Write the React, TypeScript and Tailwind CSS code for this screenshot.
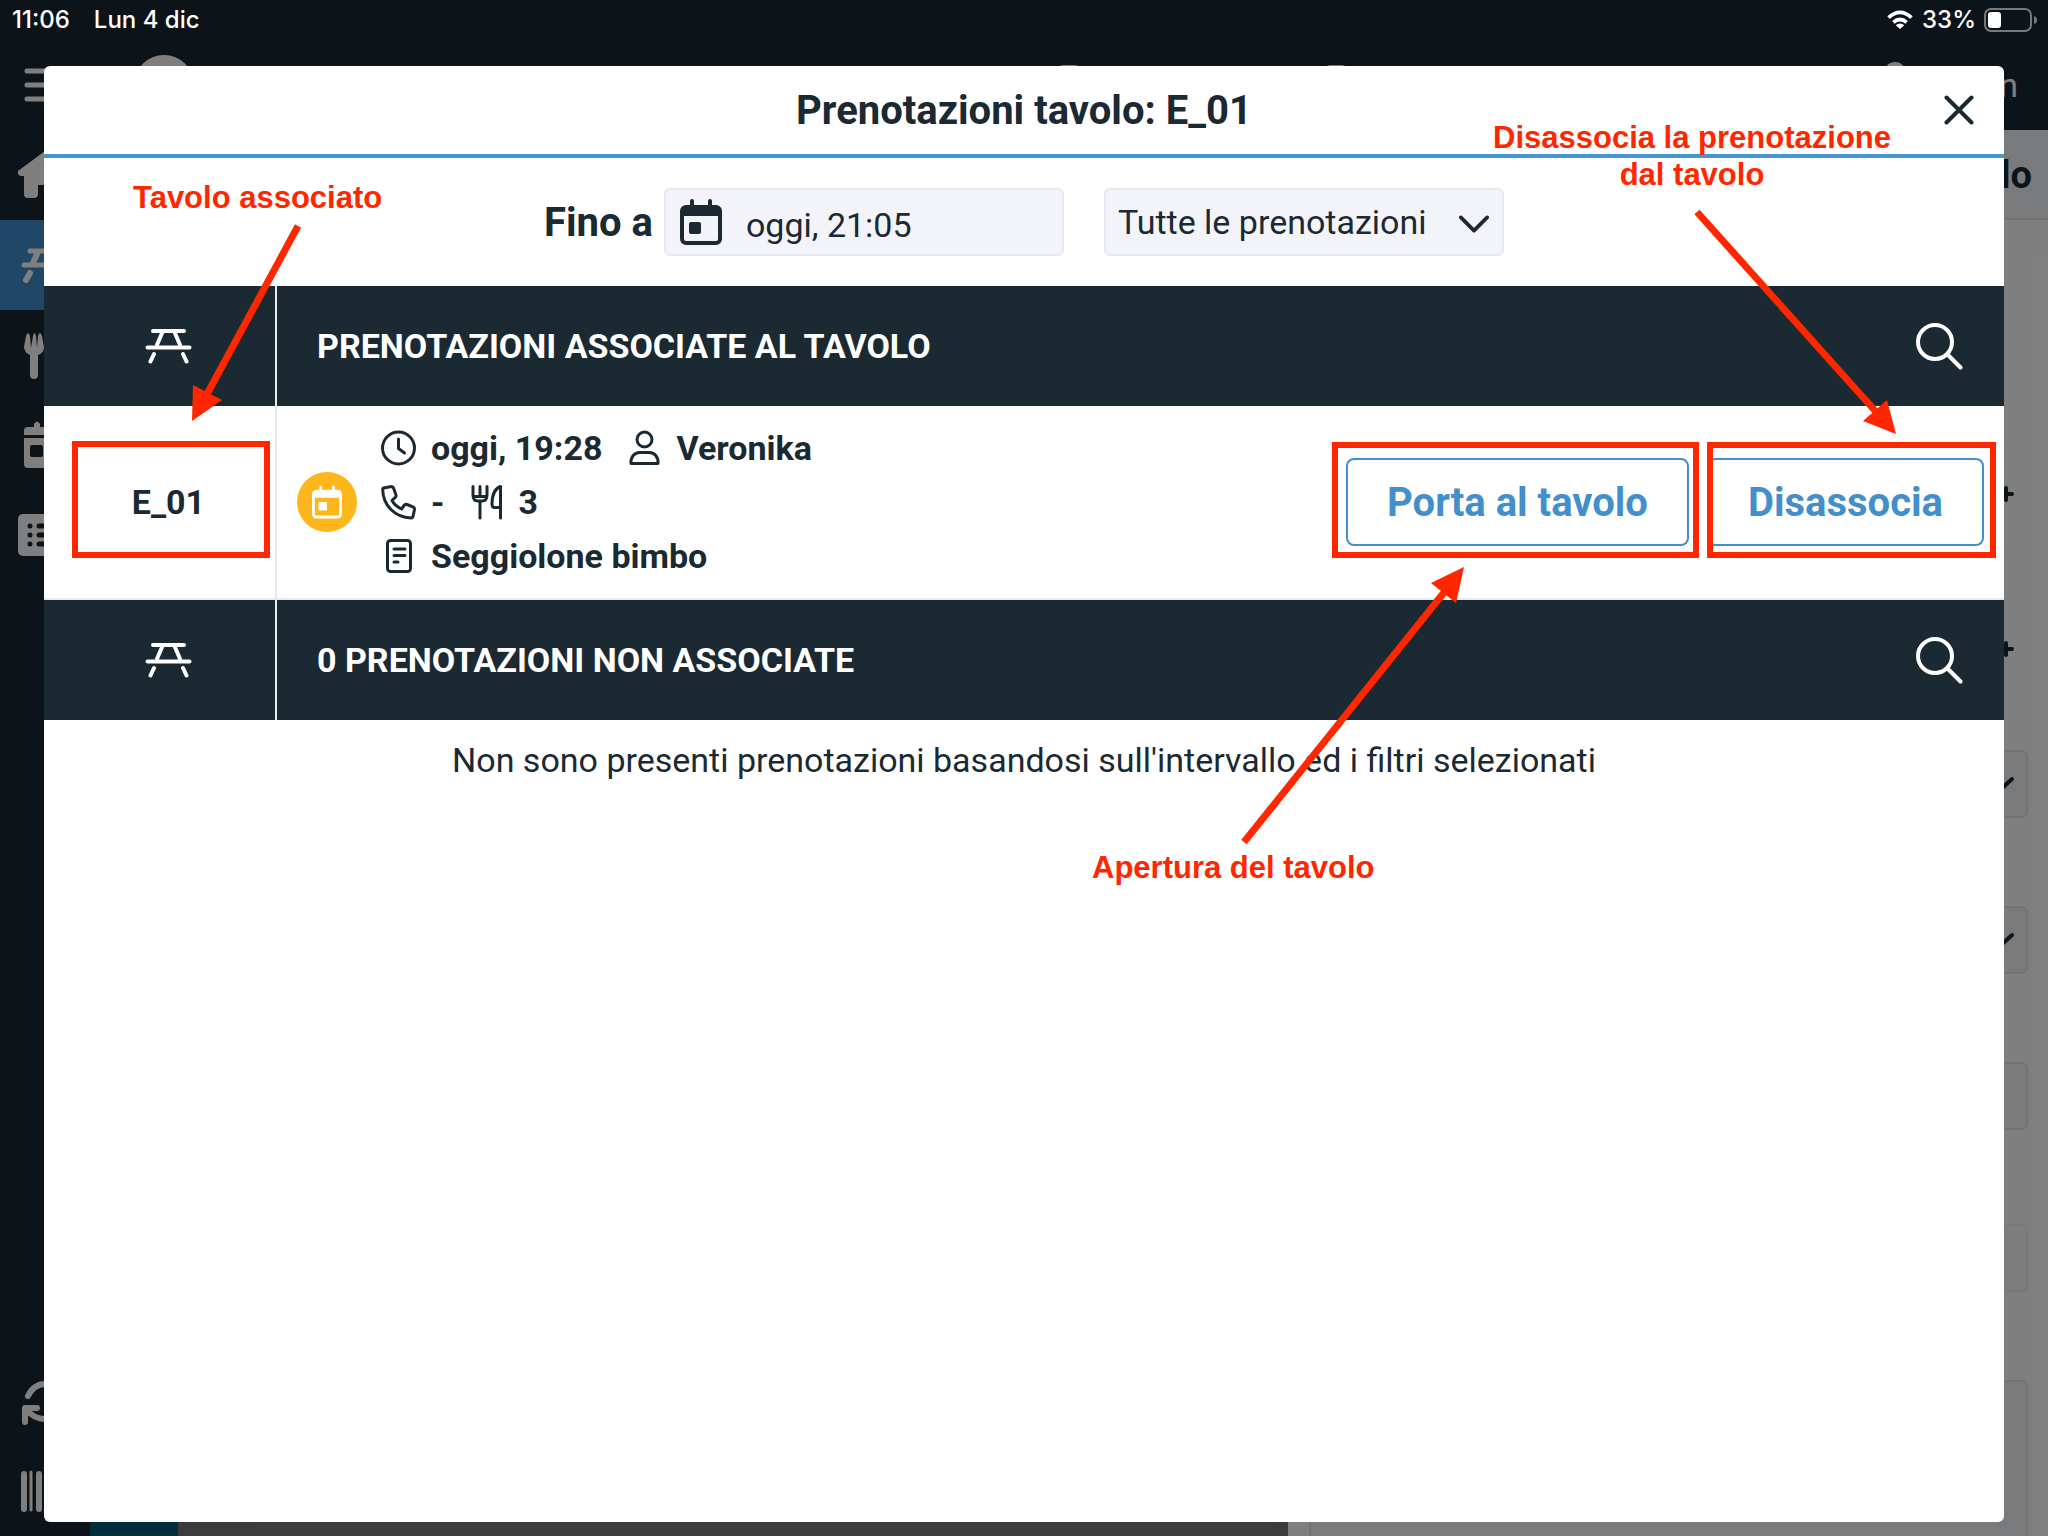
import type { ReactNode } from "react";

function PicnicTable({ className }: { className?: string }) {
  return (
    <svg viewBox="0 0 48 36" className={className} fill="none" stroke="currentColor" strokeWidth="4" strokeLinecap="round">
      <path d="M9 3H40M3.500 19.500H45.500" />
      <path d="M18.500 4L12.500 18M30.500 4L36.500 18" strokeLinecap="butt" />
      <path d="M10 26L6.500 33.500M39 26L42.500 33.500" />
    </svg>
  );
}

function CalendarIcon({ className }: { className?: string }) {
  return (
    <svg viewBox="0 0 42 46" className={className} fill="none" stroke="currentColor">
      <path d="M12 2V8M30 2V8" strokeWidth="4" strokeLinecap="round" />
      <rect x="2" y="8" width="38" height="36" rx="4" strokeWidth="4" />
      <path d="M2 8H40V17H2Z" fill="currentColor" stroke="none" />
      <rect x="9" y="23" width="12" height="12" rx="2" fill="currentColor" stroke="none" />
    </svg>
  );
}

function SearchIcon() {
  return (
    <svg viewBox="0 0 48 48" className="size-12" fill="none" stroke="currentColor" strokeWidth="4" strokeLinecap="round">
      <circle cx="19" cy="20" r="17" />
      <path d="M32 33L44.500 45.500" />
    </svg>
  );
}

function ClockIcon() {
  return (
    <svg viewBox="0 0 36 36" className="size-9" fill="none" stroke="currentColor" strokeWidth="3" strokeLinecap="round" strokeLinejoin="round">
      <circle cx="17.500" cy="18" r="16" />
      <path d="M17.500 9V18.500L23.500 23" />
    </svg>
  );
}

function PersonIcon() {
  return (
    <svg viewBox="0 0 36 36" className="size-9" fill="none" stroke="currentColor" strokeWidth="3" strokeLinejoin="round">
      <circle cx="18.500" cy="9.500" r="7.500" />
      <path d="M5 33.500C4.500 27 8.500 22.500 13.500 22.500H23.500C28.500 22.500 32.500 27 32 33.500Z" />
    </svg>
  );
}

function PhoneIcon() {
  return (
    <svg viewBox="0 0 36 36" className="size-9" fill="none" stroke="currentColor" strokeWidth="3" strokeLinejoin="round">
      <path d="M2.500 4L10.500 2.500Q12 2.500 12.500 4L15 11Q15.300 12.500 14.500 13.200L11 16.500Q14 22 20.500 25L23.500 21Q24.500 20 26 20.500L32.500 23.200Q33.700 24 33.500 25.500L32 32.500Q31.500 34 30 34C14 33.500 2 21.500 1.700 5.500Q1.700 4.300 2.500 4Z" />
    </svg>
  );
}

function CutleryIcon() {
  return (
    <svg viewBox="0 0 36 36" className="size-9" fill="none" stroke="currentColor" strokeWidth="3" strokeLinecap="round" strokeLinejoin="round">
      <path d="M5 2.500V11Q5 17 10 17H14Q19 17 19 11V2.500M12 2.500V12M6 12.500H18.500M12 18V34" />
      <path d="M32.500 2.500V34M32.500 2.500C26 5 24 13 24 20Q24 23.500 26.500 23.500H32" />
    </svg>
  );
}

function NoteIcon() {
  return (
    <svg viewBox="0 0 36 36" className="size-9" fill="none" stroke="currentColor" strokeWidth="3" strokeLinecap="round">
      <rect x="6.500" y="2.500" width="23" height="31" rx="3" />
      <path d="M13 11H24M13 17.500H24M13 24H17" />
    </svg>
  );
}

function StatusBar() {
  return (
    <div className="absolute inset-x-0 top-0 z-30 flex h-10 items-center justify-between pr-[10px] pl-3 font-[Inter,sans-serif] text-2xl font-medium text-white">
      <div className="flex gap-6">
        <span>11:06</span>
        <span>Lun 4 dic</span>
      </div>
      <div className="flex items-center gap-2">
        <svg viewBox="0 0 28 21" className="h-5 w-7" fill="none" stroke="currentColor" strokeWidth="4">
          <path d="M2 8Q14 -3 26 8M7 13Q14 7 21 13" />
          <path d="M14 20L9.500 16Q14 12.500 18.500 16Z" fill="currentColor" stroke="none" />
        </svg>
        <span>33%</span>
        <svg viewBox="0 0 54 24" className="h-6 w-[54px]" fill="none">
          <rect x="1" y="1" width="46" height="22" rx="6" stroke="#767a7d" strokeWidth="2" />
          <rect x="4" y="4" width="13" height="16" rx="3" fill="white" />
          <path d="M50 8Q53 9 53 12Q53 15 50 16Z" fill="#767a7d" />
        </svg>
      </div>
    </div>
  );
}

function Sidebar() {
  return (
    <nav className="flex w-[90px] shrink-0 flex-col bg-[#1a2832] text-white">
      <a href="#home" aria-label="Home" className="flex h-[90px] items-center pl-[18px]">
        <svg viewBox="0 0 54 48" className="h-12 w-[54px]" fill="currentColor">
          <path d="M27 0Q28 0 29 1L53 19Q55 25 50 25H48V43Q48 47 44 47H38Q34 47 34 43V34H20V43Q20 47 16 47H10Q6 47 6 43V25H3Q-1 24 0 20Z" />
        </svg>
      </a>
      <a href="#tavoli" aria-label="Tavoli" className="flex h-[90px] items-center bg-[#438fcc] pl-5">
        <svg viewBox="0 0 52 36" className="h-9 w-[52px]" fill="none" stroke="currentColor" strokeWidth="5" strokeLinecap="round">
          <path d="M10 4H42M4 18H48" />
          <path d="M18 5L12 18M34 5L40 18" strokeWidth="6" strokeLinecap="butt" />
          <path d="M10 26L6 33M42 26L46 33" strokeWidth="6" />
        </svg>
      </a>
      <a href="#menu" aria-label="Menu" className="flex h-[90px] items-center pl-6">
        <svg viewBox="0 0 44 48" className="h-12 w-11" fill="currentColor">
          <path d="M2 5Q4 -1 6 5L7 17L9 5Q10 -1 12 5L13 17L14 5Q16 -1 18 5L20 16Q20 22 14 24V44Q14 48 10 48Q6 48 6 44V24Q0 21 0 16Z" />
        </svg>
      </a>
      <a href="#prenotazioni" aria-label="Prenotazioni" className="flex h-[90px] items-center pl-6">
        <svg viewBox="0 0 44 48" className="h-12 w-11" fill="currentColor">
          <path fillRule="evenodd" d="M10 6V3Q13 -2 16 3V6H40Q44 6 44 10V14H0V10Q0 6 4 6ZM0 17H44V43Q44 47 40 47H4Q0 47 0 43ZM8 24Q6 24 6 26V34Q6 36 8 36H17Q19 36 19 34V26Q19 24 17 24Z" />
        </svg>
      </a>
      <a href="#ordini" aria-label="Ordini" className="flex h-[90px] items-center pl-[18px]">
        <svg viewBox="0 0 54 42" className="h-[42px] w-[54px]">
          <rect width="54" height="42" rx="5" fill="currentColor" />
          <path d="M12 12H12M12 21H12M12 30H12M21 12H42M21 21H42M21 30H42" stroke="#1a2832" strokeWidth="5" strokeLinecap="round" />
        </svg>
      </a>
      <div className="mt-auto flex flex-col">
        <button aria-label="Aggiorna" className="flex h-[90px] items-center pl-5">
          <svg viewBox="0 0 50 50" className="size-[50px]" fill="none" stroke="currentColor" strokeWidth="6" strokeLinecap="round" strokeLinejoin="round">
            <path d="M8 20Q14 8 25 8Q36 8 41 19M5 46V32H17M7 34Q14 43 25 43Q36 43 42 33" />
          </svg>
        </button>
        <button aria-label="Codice a barre" className="flex h-[90px] items-center pl-[21px]">
          <svg viewBox="0 0 42 42" className="size-[42px]" stroke="currentColor" strokeLinecap="round">
            <path d="M3 4V39M18 4V39" strokeWidth="6" />
            <path d="M10 2V40" strokeWidth="3" />
          </svg>
        </button>
      </div>
    </nav>
  );
}

const panelField = "h-[68px] rounded-md border-2 border-[#e6e9ee] bg-[#f3f4f8]";

function SidePanel() {
  return (
    <aside className="flex w-[760px] shrink-0 flex-col bg-white text-[#1a2832]">
      <div className="flex h-[90px] items-center justify-end border-b-2 border-[#e6e6ec] bg-[#f3f4f8] pt-[2px] pr-4 text-[38px] font-bold">lo</div>
      <div className="flex flex-1 flex-col pr-5 pl-[21px]">
        <div className="flex h-[530px] flex-col items-end gap-[139px] pt-[266px] pr-[14px]">
          {[0, 1].map((i) => (
            <svg key={i} viewBox="0 0 16 16" className="size-4" stroke="currentColor" strokeWidth="4" strokeLinecap="round">
              <path d="M8 2V14M2 8H14" />
            </svg>
          ))}
        </div>
        <div className="flex flex-1 flex-col gap-[88px]">
          {[0, 1].map((i) => (
            <div key={i} className={`${panelField} flex items-center justify-end pt-1 pr-3`}>
              <svg viewBox="0 0 32 20" className="h-5 w-8" fill="none" stroke="currentColor" strokeWidth="4" strokeLinecap="round">
                <path d="M2 3L16 16L30 3" />
              </svg>
            </div>
          ))}
          <div className={panelField} />
          <div className="mt-[6px] h-[68px] rounded-md border-2 border-[#f3f3f3] bg-[#fafafa]" />
          <div className="flex-1 rounded-t-md border-2 border-b-0 border-[#e6e9ee] bg-[#f3f4f8]" />
        </div>
      </div>
    </aside>
  );
}

function Background() {
  return (
    <div className="absolute inset-0 flex flex-col overflow-hidden">
      <header className="flex h-[130px] shrink-0 items-center justify-between bg-[#1a2832] pt-10 pr-[30px] pl-6 text-white">
        <div className="flex items-center gap-16">
          <svg viewBox="0 0 46 36" className="h-9 w-[46px]" stroke="currentColor" strokeWidth="5" strokeLinecap="round">
            <path d="M3 4H43M3 18H43M3 32H43" />
          </svg>
          <div className="size-[60px] rounded-full bg-white" />
        </div>
        <div className="flex items-center">
          <div className="mr-[227px] size-10 rounded-2xl bg-white" />
          <div className="mr-[528px] size-10 rounded-2xl bg-white" />
          <div className="mr-[93px] mb-6 size-[22px] rounded-full bg-white" />
          <span className="text-[34px]">n</span>
        </div>
      </header>
      <div className="flex flex-1">
        <Sidebar />
        <div className="flex flex-1 bg-[#777777]">
          <div className="w-[88px] bg-[#005c74]" />
        </div>
        <SidePanel />
      </div>
      <div className="absolute inset-0 bg-black/50" />
    </div>
  );
}

function SectionHeader({ title }: { title: string }) {
  return (
    <div className="flex h-[120px] bg-[#1b2932] text-white">
      <div className="flex w-[233px] shrink-0 items-center justify-center border-r-2 border-[#e6eaee] pl-4">
        <PicnicTable className="h-9 w-12" />
      </div>
      <div className="flex flex-1 items-center justify-between pr-10 pl-10">
        <h2 className="text-[34px] font-bold">{title}</h2>
        <button aria-label="Cerca">
          <SearchIcon />
        </button>
      </div>
    </div>
  );
}

function Detail({ icon, children }: { icon: ReactNode; children: ReactNode }) {
  return (
    <span className="flex items-center gap-[14px]">
      {icon}
      <span>{children}</span>
    </span>
  );
}

function ActionButton({ children }: { children: ReactNode }) {
  return (
    <button className="h-[88px] rounded-lg border-2 border-[#438fcc] px-[39px] pt-[2px] text-[40px] font-bold text-[#438fcc]">{children}</button>
  );
}

function Modal() {
  return (
    <div role="dialog" aria-labelledby="dialog-title" className="absolute inset-x-11 top-[66px] bottom-[14px] z-10 flex flex-col overflow-hidden rounded-md bg-white">
      <div className="flex h-[92px] shrink-0 items-center border-b-4 border-[#4696d0]">
        <h1 id="dialog-title" className="flex-1 pt-[2px] pl-[90px] text-center text-[40px] font-bold">Prenotazioni tavolo: E_01</h1>
        <button aria-label="Chiudi" className="flex w-[90px] justify-center">
          <svg viewBox="0 0 30 30" className="size-[30px]" stroke="currentColor" strokeWidth="4" strokeLinecap="round">
            <path d="M2.500 2.500L27.500 27.500M27.500 2.500L2.500 27.500" />
          </svg>
        </button>
      </div>

      <div className="flex h-32 shrink-0 items-center justify-center gap-10 text-[34px]">
        <div className="flex items-center gap-[11px]">
          <label htmlFor="until" className="pt-[2px] text-[40px] font-bold">Fino a</label>
          <div className="flex h-[68px] w-[400px] items-center gap-6 rounded-md border-2 border-[#e6e9ef] bg-[#f3f4f9] pl-[14px]">
            <CalendarIcon className="h-[46px] w-[42px] shrink-0" />
            <input id="until" defaultValue="oggi, 21:05" className="w-full min-w-0 bg-transparent pt-[6px] outline-none" />
          </div>
        </div>
        <div className="relative">
          <select aria-label="Filtro prenotazioni" className="h-[68px] w-[400px] appearance-none rounded-md border-2 border-[#e6e9ef] bg-[#f3f4f9] px-3">
            <option>Tutte le prenotazioni</option>
          </select>
          <svg viewBox="0 0 34 20" className="pointer-events-none absolute top-[26px] right-[14px] h-5 w-8" fill="none" stroke="currentColor" strokeWidth="4" strokeLinecap="round" strokeLinejoin="round">
            <path d="M3 3L17 17L31 3" />
          </svg>
        </div>
      </div>

      <SectionHeader title="PRENOTAZIONI ASSOCIATE AL TAVOLO" />
      <div className="flex h-[194px] shrink-0 border-b-2 border-[#e6eaee] text-[34px] font-bold">
        <div className="relative flex w-[233px] shrink-0 items-center justify-center border-r-2 border-[#e6eaee] pl-[18px]">
          E_01
          <div className="absolute top-[35px] right-[5px] bottom-10 left-7 border-[6px] border-[#ff2600]" />
        </div>
        <div className="flex flex-1 items-center justify-between pr-5 pl-5">
          <div className="flex items-center gap-6">
            <div className="flex size-[60px] items-center justify-center rounded-full bg-[#fdb61c] text-white">
              <CalendarIcon className="h-[34px] w-[30px]" />
            </div>
            <div className="flex flex-col leading-[54px]">
              <div className="flex gap-6">
                <Detail icon={<ClockIcon />}>oggi, 19:28</Detail>
                <Detail icon={<PersonIcon />}>Veronika</Detail>
              </div>
              <div className="flex gap-6">
                <Detail icon={<PhoneIcon />}>-</Detail>
                <Detail icon={<CutleryIcon />}>3</Detail>
              </div>
              <Detail icon={<NoteIcon />}>Seggiolone bimbo</Detail>
            </div>
          </div>
          <div className="flex gap-[18px]">
            <div className="relative">
              <ActionButton>Porta al tavolo</ActionButton>
              <div className="pointer-events-none absolute -top-4 -right-[10px] -bottom-3 -left-[14px] border-[6px] border-[#ff2600]" />
            </div>
            <div className="relative">
              <ActionButton>Disassocia</ActionButton>
              <div className="pointer-events-none absolute -top-4 -right-3 -bottom-3 left-0 border-[6px] border-[#ff2600]" />
            </div>
          </div>
        </div>
      </div>

      <SectionHeader title="0 PRENOTAZIONI NON ASSOCIATE" />
      <p className="pt-4 text-center text-[34px] leading-[48px]">Non sono presenti prenotazioni basandosi sull'intervallo ed i filtri selezionati</p>
    </div>
  );
}

// Red callouts drawn over the dialog
function Annotations() {
  return (
    <div className="pointer-events-none absolute inset-0 z-20 text-center font-['Liberation_Sans',sans-serif] text-[31px] leading-[37px] font-bold text-[#ff2600]">
      <svg viewBox="0 0 2048 1536" className="absolute inset-0 size-full" fill="currentColor" stroke="currentColor">
        <path d="M298 226L206 396M1697 212L1878 414M1244 842L1446 590" strokeWidth="7" />
        <path d="M192 421L193 385L222 400ZM1896 434L1863 421L1887 400ZM1464 567L1431 583L1456 603Z" stroke="none" />
      </svg>
      <p className="absolute top-[179px] left-[133px]">Tavolo associato</p>
      <p className="absolute top-[119px] right-[157px]">
        Disassocia la prenotazione
        <br />
        dal tavolo
      </p>
      <p className="absolute top-[849px] left-[1092px]">Apertura del tavolo</p>
    </div>
  );
}

export default function App() {
  return (
    <main className="relative min-h-screen w-full overflow-hidden font-[Roboto,sans-serif] text-[#1b2932]">
      <Background />
      <StatusBar />
      <Modal />
      <Annotations />
    </main>
  );
}
